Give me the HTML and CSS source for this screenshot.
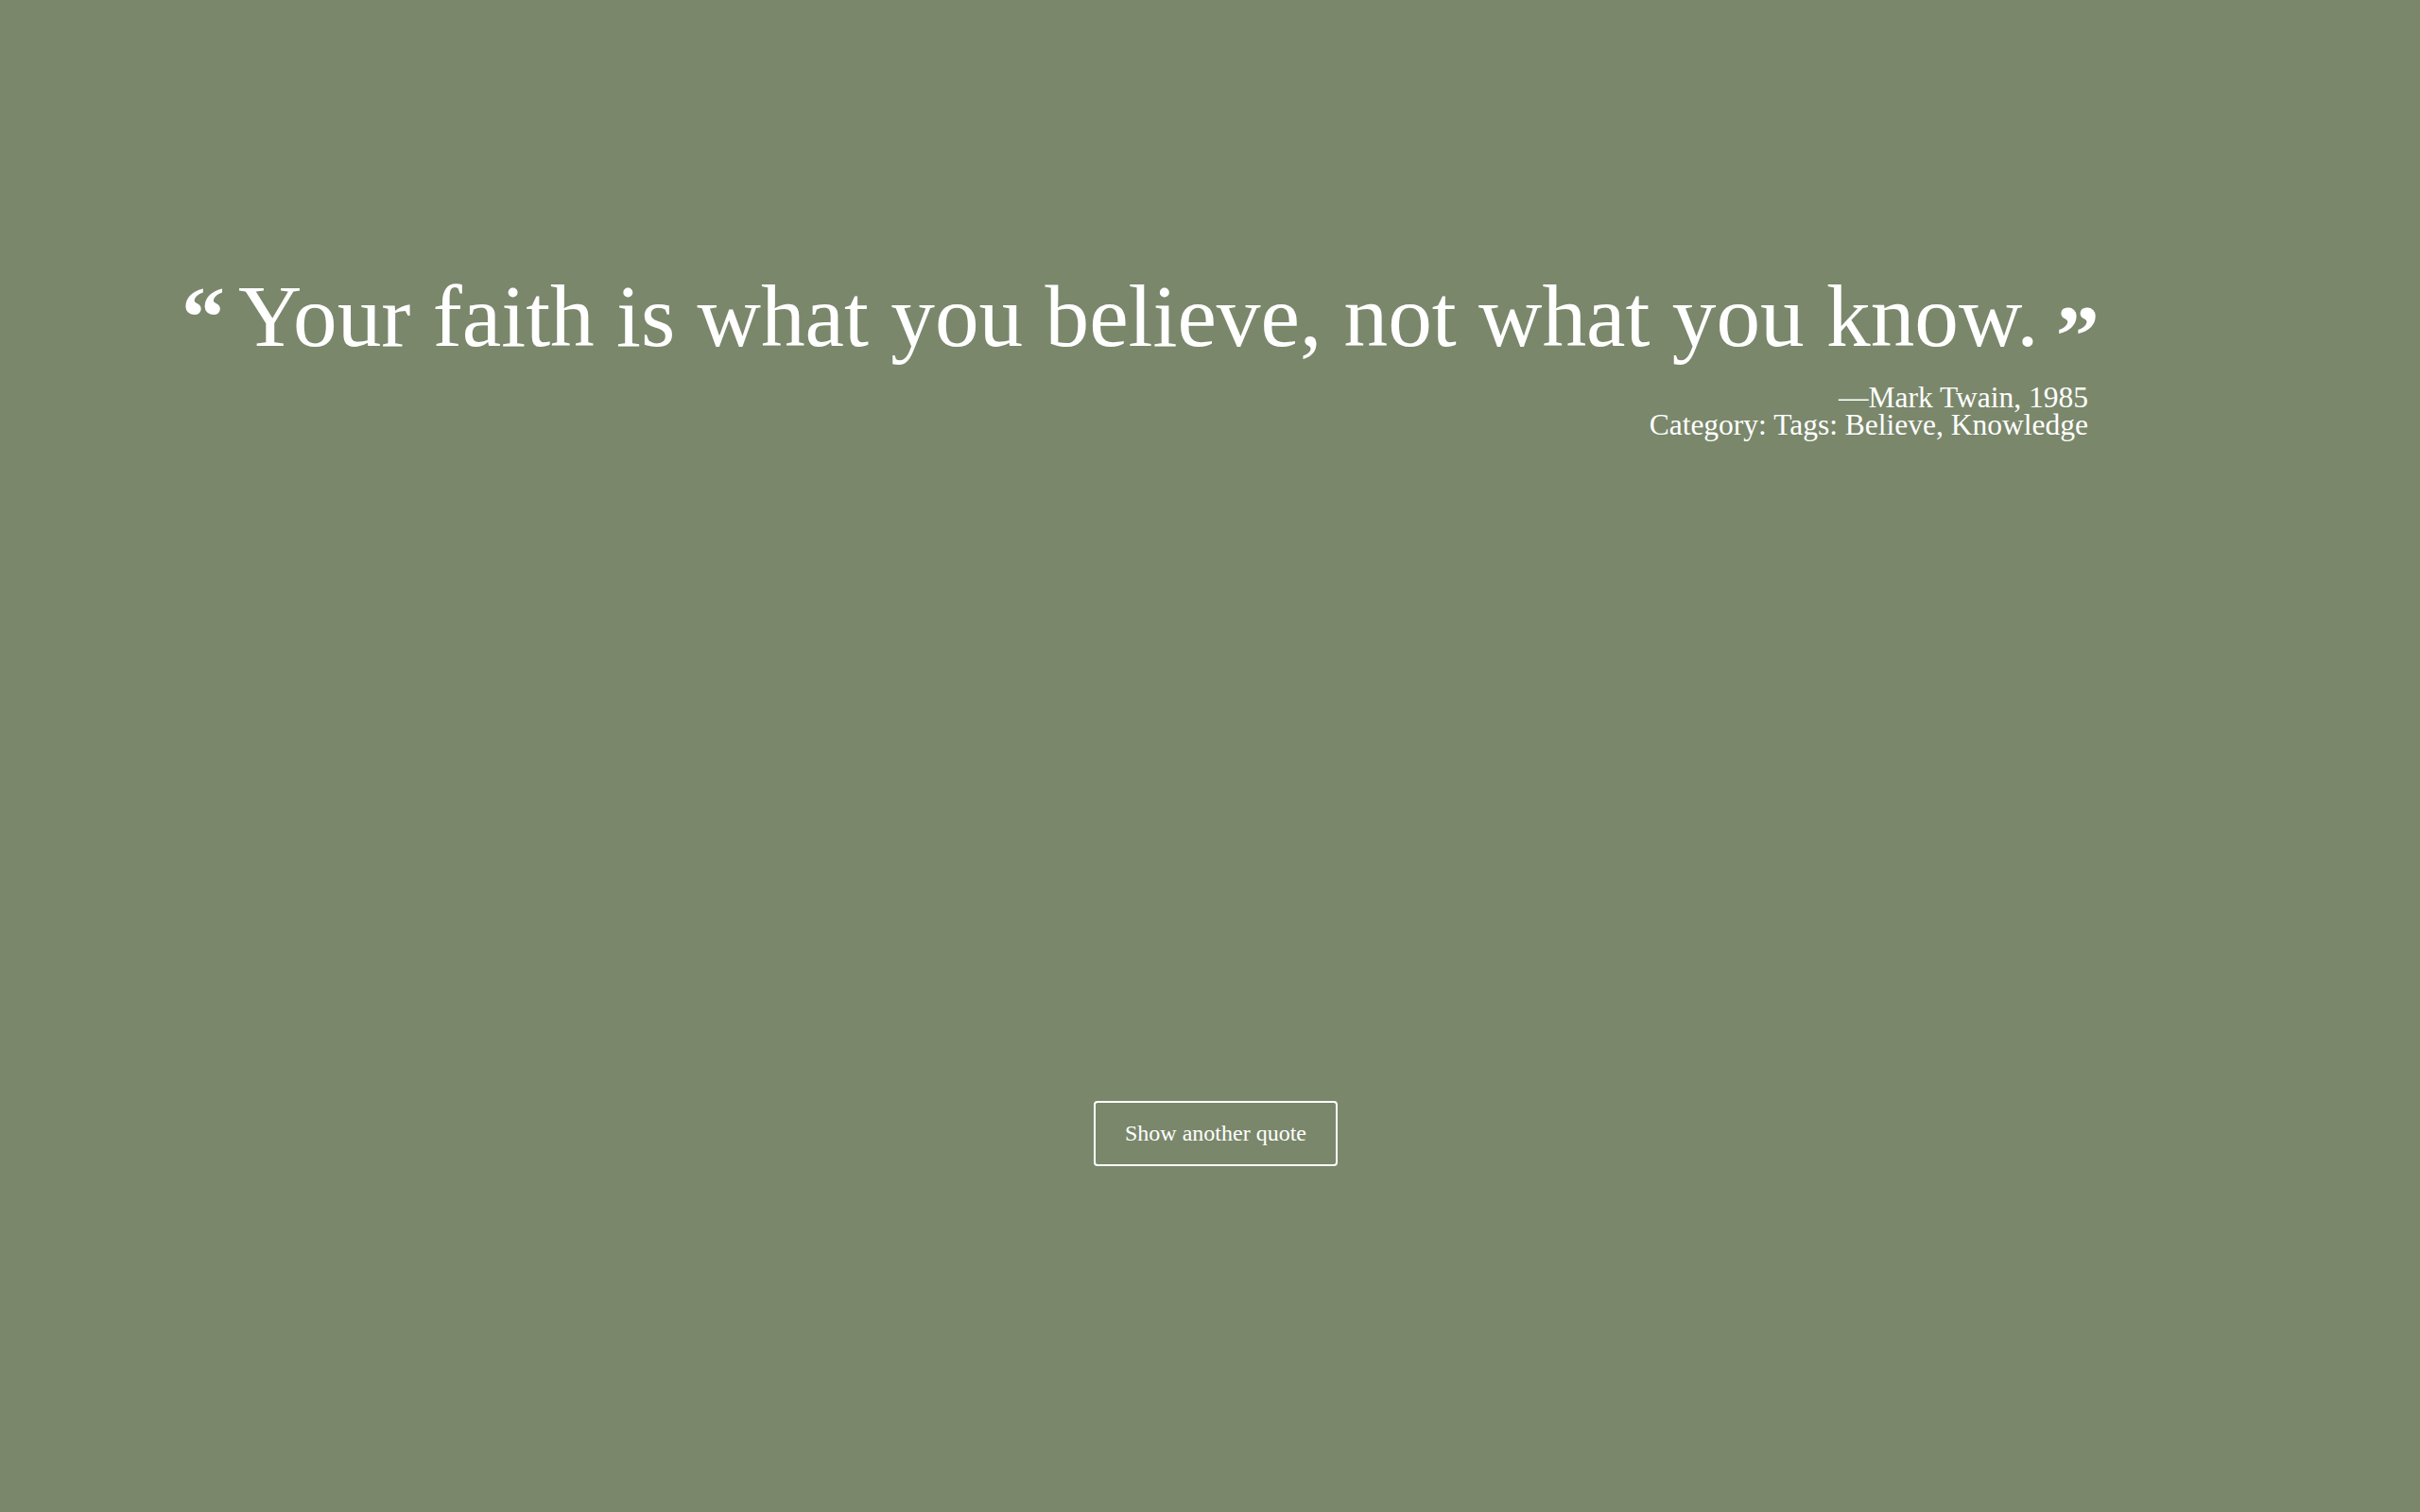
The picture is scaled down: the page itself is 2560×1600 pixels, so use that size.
FILE: index.html
```html
<!DOCTYPE html>
<html lang="en">
<head>
<meta charset="utf-8">
<title>Random Quote</title>
<link rel="stylesheet" href="styles.css">
</head>
<body>
<main class="page">
  <section class="quote-box">
    <blockquote class="quote">
      <span class="mark mark-open">“</span><span class="quote-text">Your faith is what you believe, not what you know.</span><span class="mark mark-close">”</span>
    </blockquote>
    <div class="meta">
      <div class="author">—Mark Twain, 1985</div>
      <div class="tags">Category: Tags: Believe, Knowledge</div>
    </div>
  </section>
  <div class="actions">
    <button class="next-btn" type="button">Show another quote</button>
  </div>
</main>
</body>
</html>
```

FILE: styles.css
```css
html, body {
  margin: 0;
  padding: 0;
  height: 100%;
}

body {
  background: #7a876b;
  color: #ffffff;
  font-family: "Liberation Serif", "Times New Roman", serif;
}

.page {
  min-height: 100vh;
  display: flex;
  flex-direction: column;
}

.quote-box {
  margin: 279px 0 0 192px;
  width: 2030px;
}

.quote {
  margin: 0;
  font-size: 93.3px;
  line-height: 1.2;
  white-space: nowrap;
  display: flex;
  align-items: baseline;
}

.mark {
  font-weight: 700;
  font-size: 92px;
}

.mark-open {
  margin-right: 14px;
}

.mark-close {
  margin-left: 18px;
  position: relative;
  top: 20px;
}

.meta {
  width: 2017px;
  margin-top: 15px;
  text-align: right;
  font-size: 31.5px;
  line-height: 29.5px;
}

.actions {
  display: flex;
  justify-content: center;
  margin-top: 700px;
  padding-left: 12px;
}

.next-btn {
  width: 258px;
  height: 69px;
  background: transparent;
  color: #ffffff;
  border: 2px solid #ffffff;
  border-radius: 4px;
  font-family: "Liberation Serif", "Times New Roman", serif;
  font-size: 24px;
  cursor: pointer;
}
```
